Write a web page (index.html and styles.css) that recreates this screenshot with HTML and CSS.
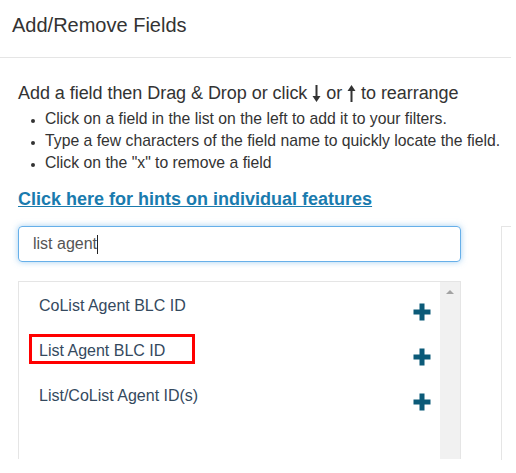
FILE: index.html
```html
<!DOCTYPE html>
<html>
<head>
<meta charset="utf-8">
<link rel="stylesheet" href="styles.css">
</head>
<body>
<div class="modal">
  <div class="modal-header">
    <h4 class="modal-title">Add/Remove Fields</h4>
  </div>
  <div class="modal-body">
    <p class="intro">Add a field then Drag &amp; Drop or click <svg class="arr" viewBox="0 0 9 17"><path d="M3.5 0h2v11h3l-4 6l-4-6h3z" /></svg> or <svg class="arr" viewBox="0 0 9 17"><path d="M3.5 17h2v-11h3l-4-6l-4 6h3z" /></svg> to rearrange</p>
    <ul class="hints">
      <li>Click on a field in the list on the left to add it to your filters.</li>
      <li>Type a few characters of the field name to quickly locate the field.</li>
      <li>Click on the "x" to remove a field</li>
    </ul>
    <a class="hint-link" href="#">Click here for hints on individual features</a>
    <div class="columns">
      <div class="left">
        <div class="search"><span class="search-text">list agent</span><span class="caret"></span></div>
        <div class="list">
          <div class="items">
            <div class="item"><span class="name">CoList Agent BLC ID</span><svg class="plus" viewBox="0 0 20 20"><path d="M7.5 1.5h5v6h6v5h-6v6h-5v-6h-6v-5h6z" /></svg></div>
            <div class="item"><span class="name marked">List Agent BLC ID</span><svg class="plus" viewBox="0 0 20 20"><path d="M7.5 1.5h5v6h6v5h-6v6h-5v-6h-6v-5h6z" /></svg></div>
            <div class="item"><span class="name">List/CoList Agent ID(s)</span><svg class="plus" viewBox="0 0 20 20"><path d="M7.5 1.5h5v6h6v5h-6v6h-5v-6h-6v-5h6z" /></svg></div>
          </div>
          <div class="scrollbar"><span class="up"></span></div>
        </div>
      </div>
      <div class="right"></div>
    </div>
  </div>
</div>
</body>
</html>
```
FILE: styles.css
```css
html, body {
  margin: 0;
  padding: 0;
  background: #fff;
}
body {
  font-family: "Liberation Sans", Arial, sans-serif;
  color: #333;
}
.modal {
  width: 511px;
}
.modal-header {
  height: 58px;
  border-bottom: 1px solid #e5e5e5;
  padding: 0 12px;
  box-sizing: border-box;
}
.modal-title {
  margin: 0;
  padding-top: 13px;
  font-size: 20px;
  font-weight: normal;
  line-height: 24px;
  color: #333;
}
.modal-body {
  padding: 0 0 0 18px;
}
.intro {
  margin: 24px 0 0;
  font-size: 18px;
  line-height: 22px;
  color: #333;
  letter-spacing: -0.05px;
}
.arr {
  width: 9px;
  height: 17px;
  fill: #333;
  vertical-align: -3px;
}
.hints {
  margin: 4px 0 0;
  padding-left: 27px;
  font-size: 15.75px;
  line-height: 22px;
  color: #333;
}
.hints li::marker {
  font-size: 12px;
}
.hint-link {
  display: inline-block;
  margin-top: 14px;
  font-size: 18px;
  font-weight: bold;
  line-height: 22px;
  color: #1a7bae;
  text-decoration: underline;
}
.columns {
  display: flex;
  gap: 40px;
  margin-top: 16px;
}
.left {
  width: 443px;
  flex: none;
}
.search {
  height: 36px;
  box-sizing: border-box;
  border: 1px solid #66afe9;
  border-radius: 4px;
  box-shadow: 0 0 6px rgba(102, 175, 233, 0.6);
  padding: 0 14px;
  display: flex;
  align-items: center;
  font-size: 16px;
  color: #555;
}
.caret {
  display: inline-block;
  width: 1px;
  height: 19px;
  background: #222;
  margin-left: 0;
}
.list {
  margin-top: 19px;
  height: 178px;
  box-sizing: border-box;
  border: 1px solid #e5e5e5;
  border-bottom: none;
  display: flex;
}
.items {
  flex: 1;
  padding-top: 19px;
}
.item {
  height: 45px;
  display: flex;
  align-items: flex-start;
  justify-content: space-between;
  padding: 0 8px 0 10px;
}
.name {
  font-size: 16px;
  line-height: 21px;
  color: #34495e;
  padding: 3px 7px 0;
  border: 3px solid transparent;
  margin-top: -12px;
}
.name.marked {
  border-color: #ff0000;
  padding: 3px 27px 0 7px;
}
.plus {
  width: 20px;
  height: 20px;
  fill: #0b5a78;
  margin-top: 1px;
}
.scrollbar {
  width: 20px;
  background: #f1f1f1;
  position: relative;
}
.up {
  position: absolute;
  top: 8px;
  left: 6px;
  width: 0;
  height: 0;
  border-left: 4px solid transparent;
  border-right: 4px solid transparent;
  border-bottom: 4px solid #a3a3a3;
}
.right {
  flex: 1;
  height: 233px;
  border-left: 1px solid #e5e5e5;
  border-top: 1px solid #e5e5e5;
}
```
